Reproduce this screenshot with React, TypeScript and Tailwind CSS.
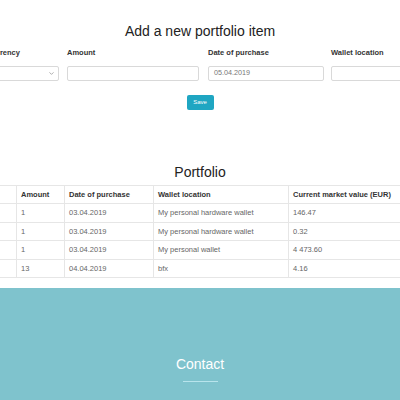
import { ChevronDown } from "lucide-react";

const rows = [
    { cur: "", amount: "1", date: "03.04.2019", wallet: "My personal hardware wallet", value: "146.47" },
    { cur: "", amount: "1", date: "03.04.2019", wallet: "My personal hardware wallet", value: "0.32" },
    { cur: "", amount: "1", date: "03.04.2019", wallet: "My personal wallet", value: "4 473.60" },
    { cur: "", amount: "13", date: "04.04.2019", wallet: "bfx", value: "4.16" },
];

function App() {
    return (
        <div className="w-[400px] h-[400px] overflow-hidden bg-white" style={{ fontFamily: '"Liberation Sans", Arial, sans-serif' }}>
            <div className="w-[600px] ml-[-100px]">
                {/* add item form */}
                <h2 className="mt-[23px] h-[16px] leading-[16px] text-[14px] text-[#222] text-center">Add a new portfolio item</h2>
                <div className="flex pl-[87px] mt-[9px]">
                    <div className="w-[72px] mr-[8px]">
                        <div className="h-[9px] leading-[9px] text-[7.5px] font-bold text-[#333]">Currency</div>
                        <div className="mt-[9px] h-[15px] border border-[#d9d9d9] rounded-[2px] flex items-center justify-end pr-[3px]">
                            <ChevronDown size={7} strokeWidth={2} className="text-[#777]" />
                        </div>
                    </div>
                    <div className="w-[132px] mr-[9px]">
                        <div className="h-[9px] leading-[9px] text-[7.5px] font-bold text-[#333]">Amount</div>
                        <div className="mt-[9px] h-[15px] border border-[#d9d9d9] rounded-[2px]"></div>
                    </div>
                    <div className="w-[116px] mr-[7px]">
                        <div className="h-[9px] leading-[9px] text-[7.5px] font-bold text-[#333]">Date of purchase</div>
                        <div className="mt-[9px] h-[15px] border border-[#d9d9d9] rounded-[2px] flex items-center pl-[5px] text-[7.2px] text-[#777]">05.04.2019</div>
                    </div>
                    <div className="w-[120px]">
                        <div className="h-[9px] leading-[9px] text-[7.5px] font-bold text-[#333]">Wallet location</div>
                        <div className="mt-[9px] h-[15px] border border-[#d9d9d9] rounded-[2px]"></div>
                    </div>
                </div>
                <div className="flex justify-center mt-[14px]">
                    <button className="w-[27px] h-[15px] bg-[#1fa6c2] rounded-[2px] text-white text-[6px] leading-[15px]">Save</button>
                </div>

                {/* portfolio table */}
                <h2 className="mt-[54px] h-[16px] leading-[16px] text-[14px] text-[#222] text-center">Portfolio</h2>
                <table className="mt-[5px] ml-[40px] border-collapse text-[7.5px]">
                    <thead>
                        <tr className="h-[18px]">
                            <th className="w-[76px] border border-[#e6e6e6]"></th>
                            <th className="w-[48px] border border-[#e6e6e6] text-left font-bold text-[#333] pl-[4px]">Amount</th>
                            <th className="w-[89px] border border-[#e6e6e6] text-left font-bold text-[#333] pl-[4px]">Date of purchase</th>
                            <th className="w-[135px] border border-[#e6e6e6] text-left font-bold text-[#333] pl-[4px]">Wallet location</th>
                            <th className="w-[140px] border border-[#e6e6e6] text-left font-bold text-[#333] pl-[4px]">Current market value (EUR)</th>
                        </tr>
                    </thead>
                    <tbody>
                        {rows.map((r, i) => (
                            <tr key={i} className={"h-[18.5px] " + (i === rows.length - 1 ? "border-b border-b-[#eadcec]" : "")}>
                                <td className="border border-[#e6e6e6] pl-[4px] text-[#666]">{r.cur}</td>
                                <td className="border border-[#e6e6e6] pl-[4px] text-[#666]">{r.amount}</td>
                                <td className="border border-[#e6e6e6] pl-[4px] text-[#666]">{r.date}</td>
                                <td className="border border-[#e6e6e6] pl-[4px] text-[#666]">{r.wallet}</td>
                                <td className="border border-[#e6e6e6] pl-[4px] text-[#666]">{r.value}</td>
                            </tr>
                        ))}
                    </tbody>
                </table>

                {/* contact */}
                <div className="mt-[10px] h-[200px] bg-[#7fc3cd] pt-[68px] flex flex-col items-center">
                    <h2 className="h-[16px] leading-[16px] text-[14px] text-white">Contact</h2>
                    <div className="mt-[9px] w-[35px] h-[1px] bg-[#b8e4ec]"></div>
                </div>
            </div>
        </div>
    );
}

export default App;
